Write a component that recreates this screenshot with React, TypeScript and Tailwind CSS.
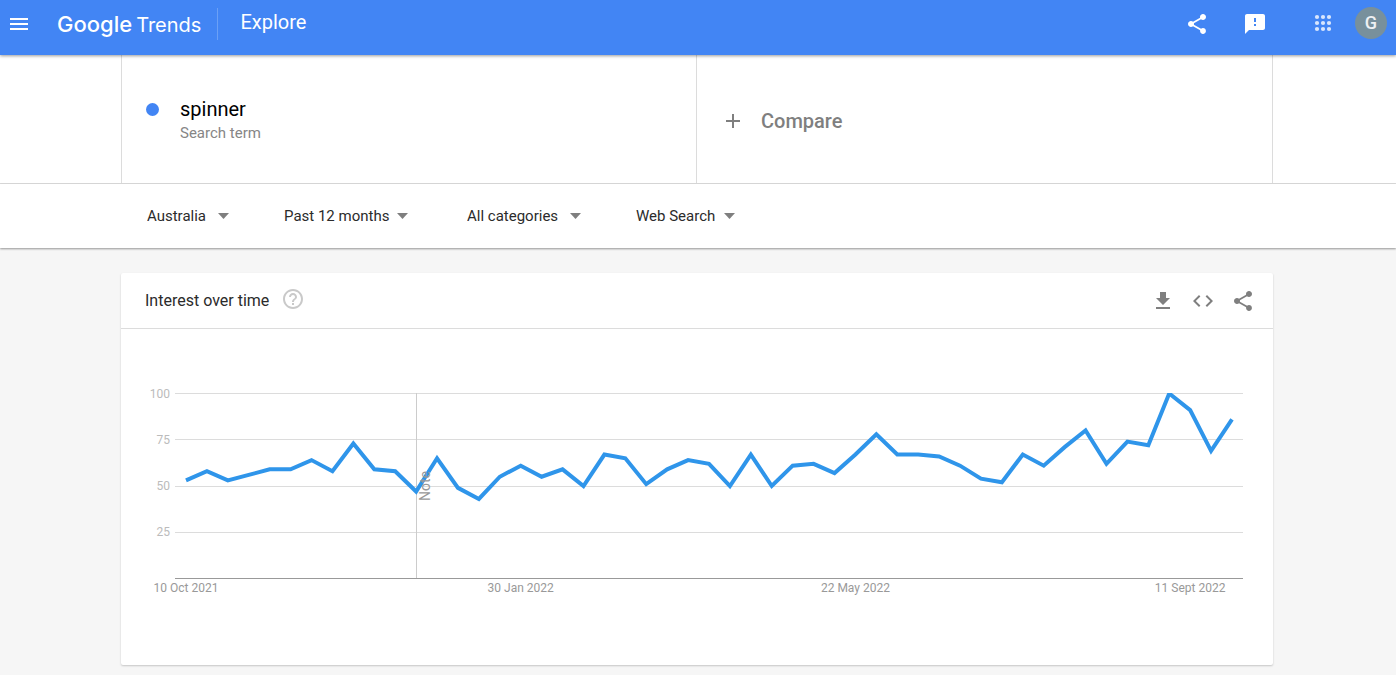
import {
  MdAdd,
  MdCode,
  MdFeedback,
  MdGetApp,
  MdHelpOutline,
  MdMenu,
  MdShare,
} from "react-icons/md";

const filters = [
  { label: "Location", value: "Australia", width: "w-[137px]", field: "w-[71px]" },
  { label: "Time range", value: "Past 12 months", width: "w-[183px]", field: "w-[113px]" },
  { label: "Category", value: "All categories", width: "w-[169px]", field: "w-[103px]" },
  { label: "Search type", value: "Web Search", width: "w-[137px]", field: "w-[88px]" },
];

// Weekly interest, 0 - 100
const interest = [
  53, 58, 53, 56, 59, 59, 64, 58, 73, 59, 58, 47, 65, 49, 43, 55, 61, 55, 59,
  50, 67, 65, 51, 59, 64, 62, 50, 67, 50, 61, 62, 57, 67, 78, 67, 67, 66, 61,
  54, 52, 67, 61, 71, 80, 62, 74, 72, 100, 91, 69, 86,
];

const dates = [
  { week: 0, text: "10 Oct 2021" },
  { week: 16, text: "30 Jan 2022" },
  { week: 32, text: "22 May 2022" },
  { week: 48, text: "11 Sept 2022" },
];

const noteWeek = 11;

const xAt = (week: number) => 65 + (week * 1046) / 50;
const yAt = (value: number) => 205 - value * 1.85;

const AppsIcon = () => (
  <svg width="24" height="24" viewBox="0 0 24 24" className="text-[#d9e6fd]" fill="currentColor">
    {[5, 11, 17].map((y) =>
      [6, 12, 18].map((x) => <circle key={`${x}-${y}`} cx={x} cy={y} r="2.1" />)
    )}
  </svg>
);

const Header = () => (
  <header className="relative z-10 flex h-[55px] items-start bg-[#4285f4] text-white shadow-[0_1px_3px_rgba(0,0,0,0.4)]">
    <div className="flex h-12 flex-1 items-center">
      <button aria-label="Main menu" className="ml-[7px]">
        <MdMenu size={24} />
      </button>
      <a
        href="#"
        className="ml-[26px] flex items-baseline gap-1 font-['Inter',sans-serif] text-[22px] leading-8"
      >
        <span className="font-medium">Google</span>
        <span className="text-xl leading-8">Trends</span>
      </a>
      <div className="ml-4 h-8 w-px bg-[#6ba0f6]" />
      <h1 className="ml-[22px] pb-1 text-xl">Explore</h1>
    </div>
    <div className="flex h-12 items-center pr-[9px]">
      <button aria-label="Share">
        <MdShare size={24} />
      </button>
      <button aria-label="Send feedback" className="ml-[34px]">
        <MdFeedback size={24} />
      </button>
      <button aria-label="Google apps" className="ml-[44px]">
        <AppsIcon />
      </button>
      <button
        aria-label="Account"
        className="mb-0.5 ml-5 flex h-8 w-8 items-center justify-center rounded-full bg-[#78909c] text-lg font-medium text-[#eef1f3]"
      >
        G
      </button>
    </div>
  </header>
);

const SearchTerms = () => (
  <section className="border-b border-[#dcdcdc] bg-white pr-0.5">
    <div className="mx-auto flex h-32 max-w-[1152px] border-x border-[#dcdcdc]">
      <div className="flex w-1/2 items-start border-r border-[#dcdcdc] pl-6 pt-10">
        <span className="mt-2 h-[13px] w-[13px] rounded-full bg-[#4285f4]" />
        <div className="ml-[21px]">
          <div className="text-xl leading-7 text-black">spinner</div>
          <div className="text-[15px] leading-5 text-[#868686]">Search term</div>
        </div>
      </div>
      <button className="flex w-1/2 items-center gap-4 pl-6 pt-1 text-xl font-medium text-[#7f7f7f]">
        <MdAdd size={24} />
        Compare
      </button>
    </div>
  </section>
);

const Filters = () => (
  <section className="relative bg-white pr-0.5 shadow-[0_1px_2px_rgba(0,0,0,0.4)]">
    <div className="mx-auto flex h-16 max-w-[1152px] items-center pl-[26px]">
      {filters.map(({ label, value, width, field }) => (
        <label key={label} className={`flex items-center ${width}`}>
          <select
            aria-label={label}
            className={`appearance-none bg-transparent text-[15px] leading-5 text-[#2b2b2b] outline-none ${field}`}
          >
            <option>{value}</option>
          </select>
          <svg width="11" height="6" viewBox="0 0 11 6" className="shrink-0 text-[#7f7f7f]">
            <path d="M0 0h11L5.500 6z" fill="currentColor" />
          </svg>
        </label>
      ))}
    </div>
  </section>
);

const Chart = () => (
  <svg
    viewBox="0 0 1152 336"
    className="block w-full"
    role="img"
    aria-label="Interest over time"
    fontFamily="Roboto, sans-serif"
  >
    {[100, 75, 50, 25].map((value) => (
      <g key={value}>
        <text x="49" y={Math.round(yAt(value) + 48.5)} textAnchor="end" fontSize="12" fill="#bbb">
          {value}
        </text>
        <path
          d={`M54 ${Math.round(yAt(value)) + 44.5}H1122`}
          stroke="#dcdcdc"
        />
      </g>
    ))}
    <path d="M54 249.500H1122" stroke="#999" />
    <path d="M295.500 64V249" stroke="#ccc" />
    {/* clipped at the 100 line */}
    <svg y="64" width="1152" height="186" viewBox="0 20 1152 186">
      <polyline
        points={interest.map((v, i) => `${xAt(i)},${yAt(v) + 0.5}`).join(" ")}
        fill="none"
        stroke="#2f95ea"
        strokeWidth="4"
      />
    </svg>
    <text
      transform={`translate(${xAt(noteWeek) + 14} 172) rotate(-90)`}
      fontSize="14"
      fill="#999"
    >
      Note
    </text>
    {dates.map(({ week, text }) => (
      <text key={text} x={xAt(week)} y="263" textAnchor="middle" fontSize="12" fill="#999">
        {text}
      </text>
    ))}
  </svg>
);

const InterestCard = () => (
  <section className="mx-auto max-w-[1152px] rounded-xs bg-white shadow-[0_1px_2px_rgba(0,0,0,0.2)]">
    <div className="flex h-14 items-center border-b border-[#dcdcdc] pl-6 pr-[18px]">
      <h2 className="text-base text-[#2b2b2b]">Interest over time</h2>
      <button aria-label="Help" className="ml-3 pb-1 text-[#c9c9c9]">
        <MdHelpOutline size={24} />
      </button>
      <div className="ml-auto flex gap-4 text-[#7f7f7f]">
        <button aria-label="Download CSV">
          <MdGetApp size={24} />
        </button>
        <button aria-label="Embed">
          <MdCode size={24} />
        </button>
        <button aria-label="Share chart">
          <MdShare size={24} />
        </button>
      </div>
    </div>
    <Chart />
  </section>
);

export default function App() {
  return (
    <div className="min-h-screen bg-[#f6f6f6] font-['Roboto',sans-serif]">
      <Header />
      <SearchTerms />
      <Filters />
      <main className="pb-2.5 pr-0.5 pt-[25px]">
        <InterestCard />
      </main>
    </div>
  );
}
